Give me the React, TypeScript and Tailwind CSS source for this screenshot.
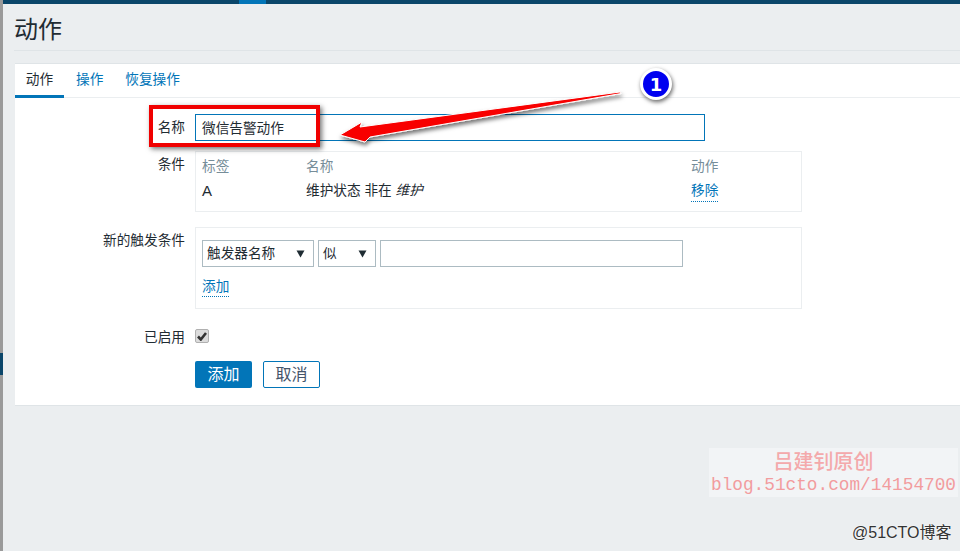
const cjk = "font-['Liberation_Sans','Noto_Sans_CJK_SC',sans-serif]";

function Row({ label, className, labelClass, children }: { label: string; className: string; labelClass?: string; children: React.ReactNode }) {
  return (
    <div className={`flex ${className}`}>
      <div className={`w-[170px] shrink-0 text-right text-[13.67px] leading-[20px] text-[#1f2c33] ${labelClass ?? ""}`}>{label}</div>
      <div className="ml-[10px] flex-1">{children}</div>
    </div>
  );
}

function Select({ label, w }: { label: string; w: string }) {
  return (
    <div className={`${w} flex h-[27px] items-center justify-between border border-[#acbbc2] bg-white pl-[4px] pr-[8px] pt-[1px] text-[13.67px] text-[#1f2c33]`}>
      <span>{label}</span>
      <svg width="9" height="8" viewBox="0 0 9 8"><path d="M0.5 0.5H8.5L4.5 7.5Z" fill="#1f2c33" /></svg>
    </div>
  );
}

function Annotations() {
  return (
    <>
      <div className="absolute left-[149px] top-[105px] h-[42px] w-[171px] border-[4px] border-[#f00000] shadow-[2px_2px_5px_rgba(0,0,0,0.55)]" />
      <svg className="absolute left-[330px] top-[80px]" width="300" height="70" viewBox="0 0 300 70">
        <defs>
          <filter id="s" x="-10%" y="-30%" width="120%" height="170%">
            <feDropShadow dx="1" dy="3" stdDeviation="2" floodColor="#000" floodOpacity="0.55" />
          </filter>
        </defs>
        <path d="M10 55 L32 42 L30 47 L290 12 L291 13.5 L40 57 L35 62 Z" fill="#f80000" stroke="#fff" strokeWidth="1" strokeLinejoin="round" filter="url(#s)" />
      </svg>
      <div className="absolute left-[640px] top-[68px] flex h-[32px] w-[32px] items-center justify-center rounded-full border-[3px] border-white bg-[#0000f0] text-[18px] font-bold text-white shadow-[1px_2px_4px_rgba(0,0,0,0.6)] font-['DejaVu_Sans',sans-serif]">
        1
      </div>
      <div className="absolute left-[709px] top-[448px] flex h-[49px] w-[249px] flex-col items-center bg-[#f2f4f6] text-[#f29c9e] font-['Liberation_Mono','Noto_Sans_CJK_SC',monospace]">
        <div className="pr-[20px] text-[20px] leading-[26px] font-medium font-['Noto_Sans_CJK_SC',serif] text-[#f4a9ab]">吕建钊原创</div>
        <div className="text-[17.75px] font-normal leading-[22px] whitespace-nowrap">blog.51cto.com/14154700</div>
      </div>
      <div className="absolute left-[852px] top-[523px] text-[16px] leading-[20px] text-[#333] [text-shadow:0_0_2px_#fff]">@51CTO博客</div>
    </>
  );
}

export default function App() {
  return (
    <div className={`relative h-[551px] w-[960px] overflow-hidden bg-[#ebeef0] ${cjk}`}>
      <div className="flex h-[4px] bg-[#0a466a]">
        <div className="ml-[239px] w-[27px] bg-[#0275b8]" />
      </div>
      <div className="absolute left-0 top-0 h-full w-[3px] bg-[#9a9a9a]" />
      <div className="absolute left-0 top-[353px] h-[22px] w-[3px] bg-[#0a466a]" />

      <div className="pl-[14px]">
        <h1 className="h-[47px] border-b-[1px] border-[#dfe4e7] pt-[8px] text-[24px] leading-[36px] font-normal text-[#1f2c33]">动作</h1>
      </div>

      <div className="ml-[15px] mt-[12px] h-[343px] border-y border-[#dfe4e7] bg-white">
        <div className="flex h-[34px] border-b border-[#ebeef0] text-[13.67px]">
          <div className="h-[34px] w-[49px] border-b-[3px] border-[#0275b8] pt-[6px] text-center leading-[20px] text-[#1f2c33]">动作</div>
          <div className="ml-[12px] pt-[6px] leading-[20px] text-[#0275b8]">操作</div>
          <div className="ml-[22px] pt-[6px] leading-[20px] text-[#0275b8]">恢复操作</div>
        </div>

        <Row label="名称" className="mt-[16px]" labelClass="pt-[4px]">
          <div className="flex h-[27px] w-[510px] items-center border border-[#0275b8] px-[6px] pt-[3px] text-[13.67px] text-[#1f2c33]">微信告警动作</div>
        </Row>

        <Row label="条件" className="mt-[10px]" labelClass="pt-[4px]">
          <div className="h-[61px] w-[607px] border border-[#ebeef0] px-[6px] pt-[5px] text-[13.67px]">
            <div className="flex leading-[20px] text-[#768d99]">
              <div className="w-[104px]">标签</div>
              <div className="w-[385px]">名称</div>
              <div>动作</div>
            </div>
            <div className="mt-[4px] flex leading-[20px] text-[#1f2c33]">
              <div className="w-[104px] text-[15px]">A</div>
              <div className="w-[385px]">维护状态 非在 <em>维护</em></div>
              <div className="border-b border-dotted border-[#0275b8] text-[#0275b8]">移除</div>
            </div>
          </div>
        </Row>

        <Row label="新的触发条件" className="mt-[15px]" labelClass="pt-[4px]">
          <div className="h-[82px] w-[607px] border border-[#ebeef0] px-[6px] pt-[12px]">
            <div className="flex gap-[4px]">
              <Select label="触发器名称" w="w-[112px]" />
              <Select label="似" w="w-[58px]" />
              <div className="h-[27px] w-[303px] border border-[#acbbc2] bg-white" />
            </div>
            <div className="mt-[11px] flex">
              <span className="border-b border-dotted border-[#0275b8] text-[13.67px] leading-[18px] text-[#0275b8]">添加</span>
            </div>
          </div>
        </Row>

        <Row label="已启用" className="mt-[18px]" labelClass="pt-[1px]">
          <div className="mt-[2px] flex h-[14px] w-[14px] items-center justify-center rounded-[2px] border border-[#b0b0b0] bg-[#dcdcdc]">
            <svg width="10" height="9" viewBox="0 0 10 9"><path d="M1 4.5 L3.8 7.5 L9 1" fill="none" stroke="#333" strokeWidth="2.6" /></svg>
          </div>
        </Row>

        <div className="ml-[180px] mt-[13px] flex gap-[11px]">
          <div className="flex h-[27px] w-[57px] items-center justify-center rounded-[2px] bg-[#0275b8] text-[16px] text-white">添加</div>
          <div className="flex h-[27px] w-[57px] items-center justify-center rounded-[2px] border border-[#0275b8] bg-white text-[16px] text-[#44546a]">取消</div>
        </div>
      </div>

      <Annotations />
    </div>
  );
}
